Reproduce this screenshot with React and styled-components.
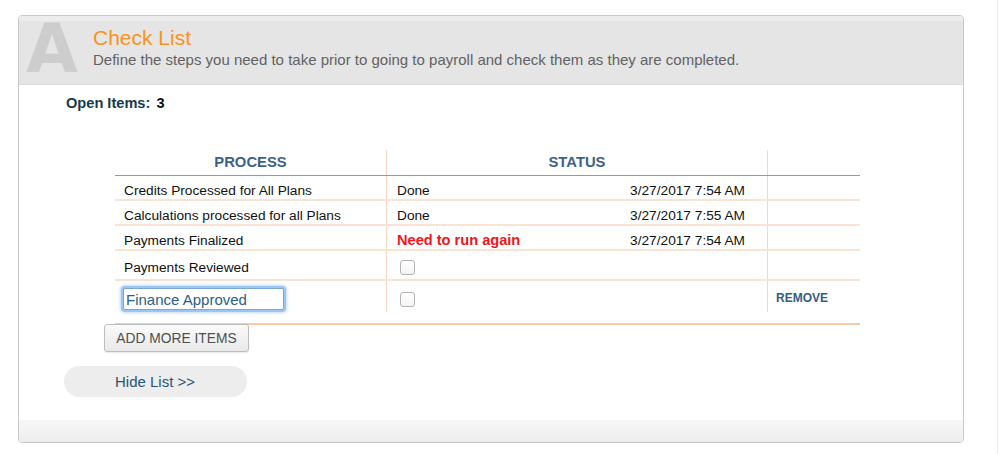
import React from "react";
import styled, { createGlobalStyle } from "styled-components";

const rows = [
  { process: "Credits Processed for All Plans", status: "Done", date: "3/27/2017 7:54 AM" },
  { process: "Calculations processed for all Plans", status: "Done", date: "3/27/2017 7:55 AM" },
  { process: "Payments Finalized", status: "Need to run again", alert: true, date: "3/27/2017 7:54 AM" },
  { process: "Payments Reviewed", check: true },
];

const App = () => {
  return (
    <>
      <GlobalStyle />
      <Page>
        <Panel>
          <Header>
            <BigLetter>A</BigLetter>
            <HeaderText>
              <Title>Check List</Title>
              <Subtitle>
                Define the steps you need to take prior to going to payroll and check them as they are completed.
              </Subtitle>
            </HeaderText>
          </Header>

          <Body>
            <OpenItems>
              Open Items: <Count>3</Count>
            </OpenItems>

            <Table>
              <HeadRow>
                <HeadCell>PROCESS</HeadCell>
                <HeadCell $divider>STATUS</HeadCell>
                <HeadCell $divider />
              </HeadRow>

              {rows.map((row, idx) => (
                <Row key={idx} $height={row.check ? 28 : 23}>
                  <ProcessCell>{row.process}</ProcessCell>
                  <StatusCell>
                    {row.check ? (
                      <CheckBox />
                    ) : (
                      <>
                        <StatusText $alert={row.alert}>{row.status}</StatusText>
                        <DateText>{row.date}</DateText>
                      </>
                    )}
                  </StatusCell>
                  <ActionCell />
                </Row>
              ))}

              {/* new item being edited */}
              <Row $height={31} $last>
                <ProcessCell>
                  <ItemInput defaultValue="Finance Approved" />
                </ProcessCell>
                <StatusCell>
                  <CheckBox />
                </StatusCell>
                <ActionCell>
                  <RemoveLink>REMOVE</RemoveLink>
                </ActionCell>
              </Row>
              <TableEnd />
            </Table>

            <AddButton>ADD MORE ITEMS</AddButton>
            <HideButton>Hide List &gt;&gt;</HideButton>
          </Body>

          <Footer />
        </Panel>
        <EdgeLine />
      </Page>
    </>
  );
};

const GlobalStyle = createGlobalStyle`
  html, body {
    margin: 0;
    padding: 0;
    background: #ffffff;
  }
  body {
    font-family: "Liberation Sans", Arial, sans-serif;
  }
`;

const Page = styled.div`
  display: flex;
  width: 999px;
  height: 454px;
  padding: 15px 0 0 18px;
  box-sizing: border-box;
`;

const Panel = styled.div`
  display: flex;
  flex-direction: column;
  width: 946px;
  height: 428px;
  box-sizing: border-box;
  border: 1px solid #c9c9c9;
  border-radius: 4px;
  background: #ffffff;
`;

const EdgeLine = styled.div`
  width: 1px;
  height: 454px;
  margin-left: 33px;
  margin-top: -15px;
  background: #ececec;
`;

// header
const Header = styled.div`
  display: flex;
  height: 69px;
  box-sizing: border-box;
  background: #e5e5e5;
  border-top: 5px solid #ececec;
  border-bottom: 1px solid #dcdcdc;
  border-radius: 3px 3px 0 0;
`;

const BigLetter = styled.div`
  width: 67px;
  padding-left: 7px;
  margin-top: -5px;
  color: #cdcdcd;
  font-family: "DejaVu Sans", "Liberation Sans", sans-serif;
  font-weight: 700;
  font-size: 67px;
  line-height: 66px;
`;

const HeaderText = styled.div`
  display: flex;
  flex-direction: column;
  padding-left: 0;
  padding-top: 5px;
`;

const Title = styled.div`
  color: #f7931e;
  font-size: 21px;
  line-height: 24px;
`;

const Subtitle = styled.div`
  color: #626262;
  font-size: 15px;
  line-height: 18px;
  margin-top: 1px;
`;

// body
const Body = styled.div`
  flex: 1;
  display: flex;
  flex-direction: column;
  padding: 10px 0 0 47px;
`;

const OpenItems = styled.div`
  color: #173a4c;
  font-size: 14.6px;
  font-weight: 700;
  line-height: 16px;
`;

const Count = styled.span`
  color: #111;
  margin-left: 2px;
`;

const Table = styled.div`
  width: 745px;
  margin: 39px 0 0 49px;
`;

const HeadRow = styled.div`
  display: grid;
  grid-template-columns: 271px 381px 93px;
  height: 25px;
  border-bottom: 1px solid #e0843e;
`;

const HeadCell = styled.div`
  display: flex;
  align-items: center;
  justify-content: center;
  color: #3d6287;
  font-size: 14.8px;
  font-weight: 700;
  padding-bottom: 1px;
  border-left: ${(p) => (p.$divider ? "1px solid #f6d7c2" : "none")};
`;

const Row = styled.div`
  display: grid;
  grid-template-columns: 271px 381px 93px;
  height: ${(p) => p.$height}px;
  border-bottom: ${(p) => (p.$last ? "none" : "2px solid #fbe3d3")};
`;

const ProcessCell = styled.div`
  display: flex;
  align-items: center;
  padding: 5px 0 0 9px;
  color: #111;
  font-size: 13.7px;
`;

const StatusCell = styled.div`
  display: flex;
  align-items: center;
  justify-content: space-between;
  padding: 5px 22px 0 10px;
  border-left: 1px solid #f6d7c2;
  font-size: 13.7px;
  color: #111;
`;

const ActionCell = styled.div`
  display: flex;
  align-items: center;
  padding: 3px 0 0 8px;
  border-left: 1px solid #f6d7c2;
`;

const StatusText = styled.span`
  color: ${(p) => (p.$alert ? "#f2141b" : "#111")};
  font-weight: ${(p) => (p.$alert ? 700 : 400)};
  font-size: ${(p) => (p.$alert ? "14.6px" : "13.7px")};
`;

const DateText = styled.span`
  color: #111;
`;

const CheckBox = styled.div`
  width: 13px;
  height: 13px;
  margin: 0 0 0 3px;
  border: 1px solid #b3b3b3;
  border-radius: 3px;
  background: linear-gradient(#ffffff, #f3f3f3);
`;

const ItemInput = styled.input`
  width: 161px;
  height: 22px;
  box-sizing: border-box;
  margin: 0 0 0 -1px;
  padding: 0 2px;
  border: 1px solid #7aa7d6;
  border-radius: 2px;
  box-shadow: 0 0 0 2px #9cc6f2, 0 0 3px 3px rgba(120, 170, 230, 0.45);
  outline: none;
  color: #2c5d87;
  font-family: "Liberation Sans", Arial, sans-serif;
  font-size: 15px;
`;

const RemoveLink = styled.span`
  color: #355d82;
  font-size: 12px;
  font-weight: 700;
`;

const TableEnd = styled.div`
  height: 11px;
  border-bottom: 2px solid #f6caa9;
`;

const AddButton = styled.div`
  display: flex;
  align-items: center;
  justify-content: center;
  width: 145px;
  height: 28px;
  box-sizing: border-box;
  margin: -1px 0 0 38px;
  border: 1px solid #bdbdbd;
  border-radius: 3px;
  background: linear-gradient(#fafafa, #e9e9e9);
  box-shadow: 0 1px 1px rgba(0, 0, 0, 0.08);
  color: #505050;
  font-size: 13.8px;
`;

const HideButton = styled.div`
  display: flex;
  align-items: center;
  width: 183px;
  height: 31px;
  box-sizing: border-box;
  margin: 14px 0 0 -2px;
  padding-left: 51px;
  border-radius: 16px;
  background: #ededed;
  color: #2a5378;
  font-size: 15px;
`;

const Footer = styled.div`
  height: 22px;
  border-radius: 0 0 3px 3px;
  background: linear-gradient(#f7f7f7, #ededed);
`;

export default App;
